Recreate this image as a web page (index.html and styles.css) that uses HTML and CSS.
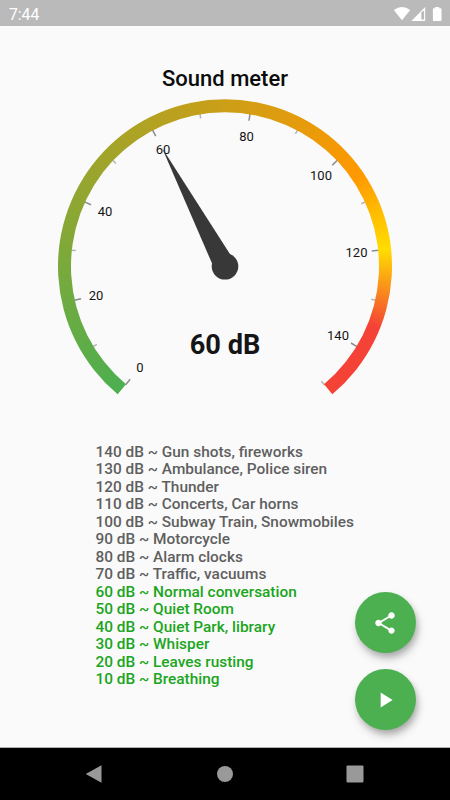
FILE: index.html
```html
<!DOCTYPE html>
<html lang="en">
<head>
<meta charset="utf-8">
<title>Sound meter</title>
<link rel="stylesheet" href="styles.css">
</head>
<body>
<div class="screen">
  <header class="status">
    <span class="time">7:44</span>
    <svg class="status-icons" width="50" height="16" viewBox="393 5 50 16">
      <path d="M393.8 9 Q402 3 410.2 9 L402 19.2Z" fill="#fff"/>
      <path fill-rule="evenodd" d="M425.2 6V20H411.4ZM421.3 11.3V18.5H424.1V9.5Z" fill="#fff"/>
      <path d="M435 6h4.200v1.200h1.400q.9 0 .9.900v11q0 .9-.9.900h-6.800q-.9 0-.9-.9v-11q0-.9.9-.9h1.200z" fill="#fff"/>
    </svg>
  </header>
  <main class="content">
    <h1 class="title">Sound meter</h1>
    <div class="gauge">
      <div class="arc"></div>
      <svg class="dial" width="334" height="296" viewBox="58 99 334 296">
        <g class="major" transform="translate(225 266.300)">
          <path transform="rotate(130)" d="M147.500 0H154.500"/>
          <path transform="rotate(167.333)" d="M147.500 0H154.500"/>
          <path transform="rotate(204.667)" d="M147.500 0H154.500"/>
          <path transform="rotate(242)" d="M147.500 0H154.500"/>
          <path transform="rotate(279.333)" d="M147.500 0H154.500"/>
          <path transform="rotate(316.667)" d="M147.500 0H154.500"/>
          <path transform="rotate(354)" d="M147.500 0H154.500"/>
          <path transform="rotate(391.333)" d="M147.500 0H154.500"/>
        </g>
        <g class="minor" transform="translate(225 266.300)">
          <path transform="rotate(148.667)" d="M150 0H154.500"/>
          <path transform="rotate(186)" d="M150 0H154.500"/>
          <path transform="rotate(223.333)" d="M150 0H154.500"/>
          <path transform="rotate(260.667)" d="M150 0H154.500"/>
          <path transform="rotate(298)" d="M150 0H154.500"/>
          <path transform="rotate(335.333)" d="M150 0H154.500"/>
          <path transform="rotate(372.667)" d="M150 0H154.500"/>
          <path transform="rotate(410)" d="M150 0H154.500"/>
        </g>
        <g class="labels">
          <text x="140" y="372">0</text>
          <text x="96" y="300">20</text>
          <text x="105" y="216">40</text>
          <text x="163" y="154">60</text>
          <text x="246.500" y="140.500">80</text>
          <text x="321" y="180">100</text>
          <text x="356.500" y="257">120</text>
          <text x="338" y="339.500">140</text>
        </g>
        <g class="needle" transform="translate(225 266.300)">
          <path transform="rotate(242)" d="M0 -10.800L134 0L0 10.800Z"/>
          <circle r="13.300"/>
        </g>
        <text class="reading" x="225" y="354">60 dB</text>
      </svg>
    </div>
    <ul class="levels">
      <li>140 dB ~ Gun shots, fireworks</li>
      <li>130 dB ~ Ambulance, Police siren</li>
      <li>120 dB ~ Thunder</li>
      <li>110 dB ~ Concerts, Car horns</li>
      <li>100 dB ~ Subway Train, Snowmobiles</li>
      <li>90 dB ~ Motorcycle</li>
      <li>80 dB ~ Alarm clocks</li>
      <li>70 dB ~ Traffic, vacuums</li>
      <li class="on">60 dB ~ Normal conversation</li>
      <li class="on">50 dB ~ Quiet Room</li>
      <li class="on">40 dB ~ Quiet Park, library</li>
      <li class="on">30 dB ~ Whisper</li>
      <li class="on">20 dB ~ Leaves rusting</li>
      <li class="on">10 dB ~ Breathing</li>
    </ul>
    <div class="actions">
      <button class="fab" aria-label="Share">
        <svg width="26" height="26" viewBox="0 0 24 24"><path d="M18 16.080c-.76 0-1.440.3-1.960.770L8.910 12.700c.050-.230.090-.460.090-.700s-.040-.470-.090-.700l7.050-4.110c.540.500 1.250.810 2.040.810 1.660 0 3-1.340 3-3s-1.340-3-3-3-3 1.340-3 3c0 .240.040.470.090.700L8.040 9.810C7.500 9.310 6.790 9 6 9c-1.660 0-3 1.340-3 3s1.340 3 3 3c.790 0 1.500-.310 2.040-.810l7.120 4.160c-.050.210-.080.430-.080.650 0 1.610 1.310 2.920 2.920 2.920s2.920-1.310 2.920-2.920-1.310-2.920-2.920-2.920z"/></svg>
      </button>
      <button class="fab" aria-label="Play">
        <svg width="26" height="26" viewBox="0 0 24 24"><path d="M8 5v14l11-7z"/></svg>
      </button>
    </div>
  </main>
  <nav class="navbar">
    <svg width="18" height="20" viewBox="0 0 18 20"><path d="M16.500 1.200V18.800L.7 10Z"/></svg>
    <svg width="18" height="20" viewBox="0 0 18 20"><circle cx="9" cy="10" r="8"/></svg>
    <svg width="18" height="20" viewBox="0 0 18 20"><rect x=".5" y="1.500" width="17" height="17" rx="1"/></svg>
  </nav>
</div>
</body>
</html>
```
FILE: styles.css
```css
* { box-sizing: border-box; }

body {
  margin: 0;
  font-family: Roboto, sans-serif;
  background: #fafafa;
}

.screen {
  width: 450px;
  height: 800px;
  display: flex;
  flex-direction: column;
  overflow: hidden;
}

.status {
  height: 26px;
  flex: none;
  display: flex;
  justify-content: space-between;
  align-items: center;
  padding: 1px 7px 0 9px;
  background: #bababa;
  color: #fff;
}

.time { font-size: 15.700px; line-height: 24px; margin-top: 2px; }

.content {
  flex: 1;
  position: relative;
  display: flex;
  flex-direction: column;
  align-items: center;
}

.title {
  margin: 40px 0 0;
  height: 33px;
  font-size: 22px;
  line-height: 26px;
  font-weight: 500;
  color: #0c0c0c;
}

.gauge {
  display: grid;
  width: 334px;
  height: 296px;
}

.arc,
.dial { grid-area: 1 / 1; }

.arc {
  height: 334px;
  margin-top: .3px;
  background: conic-gradient(from 220deg, #4caf50 0deg, #ff9800 196deg, #ffdd00 224deg, #f44336 252deg, #f44336 320deg, #4caf50 320deg);
  clip-path: path("M59.650 294.930 A167 167 0 1 1 274.350 294.930 L265.990 284.970 A154 154 0 1 0 68.010 284.970 Z");
}

.major path { stroke: #8c8c8c; stroke-width: 1.500; }
.minor path { stroke: #b4b4b4; stroke-width: 1.500; }

.labels {
  font-size: 13px;
  fill: #151515;
  text-anchor: middle;
}

.needle { fill: #383838; }

.reading {
  font-size: 27.200px;
  font-weight: 700;
  fill: #151515;
  text-anchor: middle;
}

.levels {
  list-style: none;
  align-self: flex-start;
  margin: 48.700px 0 0 95.500px;
  padding: 0;
  font-size: 15.400px;
  line-height: 17.500px;
  font-weight: 500;
  color: #5f5f5f;
  white-space: nowrap;
}

.on { color: #1ba521; }

.actions {
  position: absolute;
  right: 34px;
  bottom: 17px;
  display: flex;
  flex-direction: column;
  gap: 16px;
}

.fab {
  width: 61px;
  height: 61px;
  border: 0;
  padding: 0 1px 0 0;
  border-radius: 50%;
  display: grid;
  place-items: center;
  background: #4caf50;
  fill: #fff;
  box-shadow: 2px 4px 6px -1px rgba(0, 0, 0, .2), 2px 6px 10px rgba(0, 0, 0, .18);
}

.navbar {
  height: 53px;
  flex: none;
  display: flex;
  justify-content: space-between;
  align-items: center;
  padding: 0 86px 0 85px;
  background: #000;
  border-top: 1px solid #b0b0b0;
  fill: #999;
}
```
